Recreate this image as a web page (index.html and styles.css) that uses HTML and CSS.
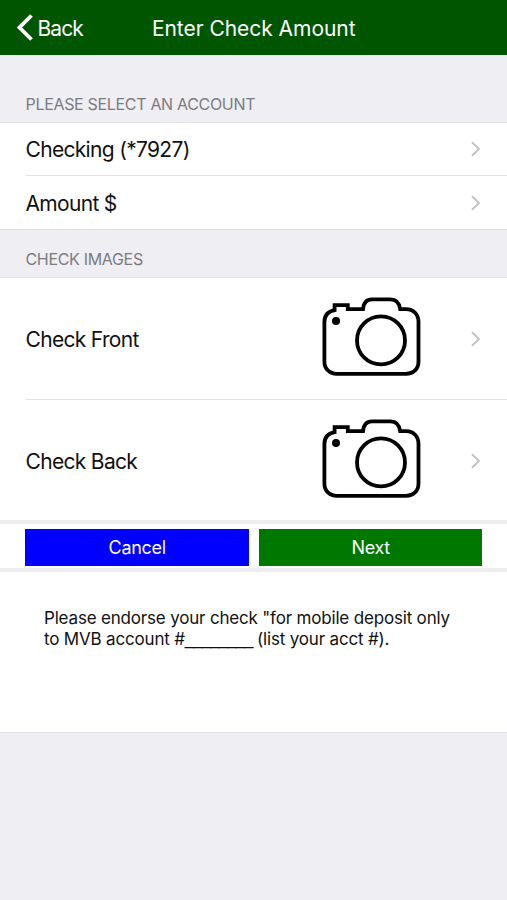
FILE: index.html
```html
<!DOCTYPE html>
<html lang="en">
<head>
<meta charset="utf-8">
<title>Enter Check Amount</title>
<link rel="stylesheet" href="styles.css">
</head>
<body>
<svg width="0" height="0" class="defs" aria-hidden="true">
  <symbol id="chevron" viewBox="0 0 10 16"><path d="M1 1.2 8 8 1 14.8" fill="none" stroke="#c4c4c6" stroke-width="2"/></symbol>
  <symbol id="camera" viewBox="12 12 99 79">
    <g fill="none" stroke="#000" stroke-width="3.8">
      <path d="M24.600 25.200V20.200H37.800V24.200H53C53.600 18 56.500 14.400 62 14.400H80.500C86 14.400 89.300 18 90.200 24.200H96C103.500 24.200 108.500 29.500 108.500 37V76.500C108.500 84 103.500 88.800 96 88.800H27C19.500 88.800 14.400 84 14.400 76.500V37C14.400 30 18 26.500 24.600 25.200Z"/>
      <circle cx="71" cy="55.400" r="24"/>
    </g>
    <circle cx="26" cy="35.900" r="4"/>
  </symbol>
</svg>
<header class="nav">
  <a class="back"><svg width="16" height="27" viewBox="0 0 16 27"><path d="M14.500 1.500 2.500 13.500 14.500 25.500" fill="none" stroke="#fff" stroke-width="3.800"/></svg><span class="back-text">Back</span></a>
  <h1 class="title">Enter Check Amount</h1>
</header>
<main>
  <h2 class="section section-first">PLEASE SELECT AN ACCOUNT</h2>
  <div class="group accounts">
    <div class="row"><span>Checking (*7927)</span><svg class="chevron"><use href="#chevron"/></svg></div>
    <div class="row"><span>Amount $</span><svg class="chevron"><use href="#chevron"/></svg></div>
  </div>
  <h2 class="section">CHECK IMAGES</h2>
  <div class="group">
    <div class="row tall"><span>Check Front</span><svg class="camera"><use href="#camera"/></svg><svg class="chevron"><use href="#chevron"/></svg></div>
    <div class="row tall"><span>Check Back</span><svg class="camera"><use href="#camera"/></svg><svg class="chevron"><use href="#chevron"/></svg></div>
  </div>
  <div class="actions">
    <button class="button cancel">Cancel</button>
    <button class="button next">Next</button>
  </div>
  <p class="note">Please endorse your check "for mobile deposit only<br>to MVB account #<span class="blank">________</span> (list your acct #).</p>
</main>
</body>
</html>
```
FILE: styles.css
```css
* { box-sizing: border-box; }
body {
  margin: 0;
  min-height: 900px;
  background: #efeef3;
  color: #111;
  font-family: Inter, "Liberation Sans", sans-serif;
  font-size: 21px;
}
.defs { display: none; }
.nav {
  display: grid;
  grid-template-columns: 1fr auto 1fr;
  align-items: center;
  height: 54.500px;
  padding: 1px 16px 0 16.500px;
  background: #005500;
  color: #fff;
}
.back { display: flex; align-items: center; gap: 5px; }
.back-text { padding-top: 1px; letter-spacing: -0.900px; }
.title { margin: 0; padding-top: 1px; font-size: 21px; font-weight: 400; letter-spacing: -0.040px; white-space: nowrap; }
.section {
  display: flex;
  align-items: flex-end;
  height: 47px;
  margin: 0;
  padding: 0 25.500px 8px;
  color: #7c7c80;
  font-size: 16px;
  font-weight: 400;
  line-height: 20px;
  letter-spacing: -0.320px;
}
.section-first { height: 67.500px; }
.group { background: #fff; border-top: 1px solid #e3e3e5; }
.accounts { border-bottom: 1px solid #e0e0e2; }
.row {
  display: flex;
  align-items: center;
  height: 52px;
  margin-left: 25.500px;
  padding-right: 26px;
}
.row + .row { height: 54px; border-top: 1px solid #e2e2e4; }
.row > span { flex: 1; padding-top: 1px; letter-spacing: -0.680px; white-space: nowrap; }
.chevron { width: 10px; height: 16px; }
.row.tall { height: 121px; }
.row.tall + .tall { padding-top: 1px; }
.camera { width: 99px; height: 79px; margin: 0 50px 4px 0; }
.actions {
  display: flex;
  gap: 10px;
  height: 52px;
  padding: 5px 24.600px 2px 25.400px;
  background: #fff;
  border-top: 4px solid #eeeef0;
  border-bottom: 4px solid #eeeef0;
}
.button {
  flex: 1;
  height: 37px;
  padding: 0;
  border: 0;
  color: #fff;
  font: 400 18px Inter, sans-serif;
  letter-spacing: -0.300px;
}
.cancel { background: #0000fe; }
.next { background: #007800; }
.note {
  height: 161px;
  margin: 0;
  padding: 36px 0 0 44px;
  background: #fff;
  border-bottom: 1px solid #e3e3e5;
  font-size: 17px;
  line-height: 21px;
  letter-spacing: -0.180px;
  white-space: nowrap;
}
.blank { font-family: "Liberation Sans", sans-serif; letter-spacing: -1px; line-height: 1; }
```
